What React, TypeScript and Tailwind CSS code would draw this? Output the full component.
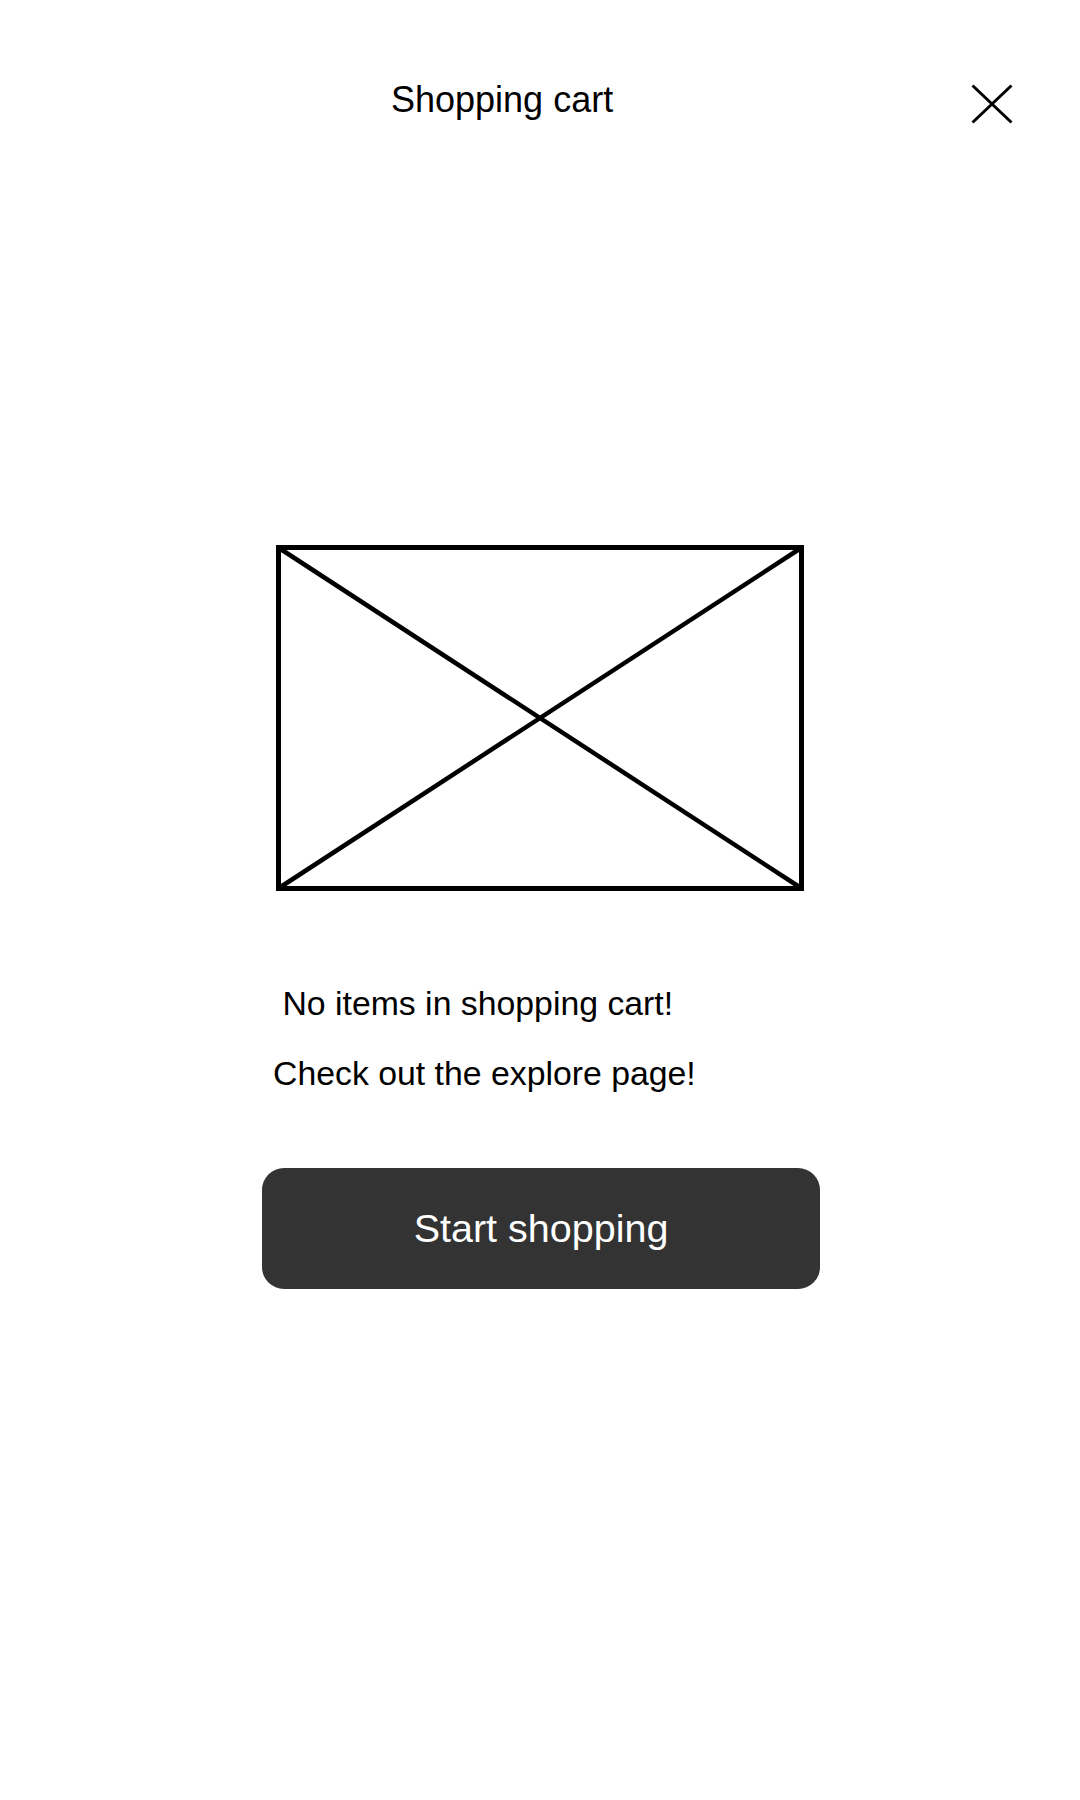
export default function App() {
    return (
        <div className="w-full min-h-[1800px] bg-white text-black font-['Liberation_Sans',Arial,sans-serif]">
            {/* Header */}
            <div className="flex items-start pt-[80px]">
                <h1 className="ml-[391px] text-[36px] leading-[40px] font-normal">
                    Shopping cart
                </h1>
                <button className="ml-auto mr-[67px] mt-[4px]" aria-label="Close">
                    <svg width="42" height="40" viewBox="0 0 42 40">
                        <line x1="1.5" y1="1.5" x2="40.5" y2="38.5" stroke="#000" strokeWidth="3" />
                        <line x1="40.5" y1="1.5" x2="1.5" y2="38.5" stroke="#000" strokeWidth="3" />
                    </svg>
                </button>
            </div>

            {/* Image placeholder */}
            <div className="flex justify-center mt-[421px]">
                <svg width="528" height="346" viewBox="0 0 528 346">
                    <rect x="2.5" y="2.5" width="523" height="341" fill="none" stroke="#000" strokeWidth="5" />
                    <line x1="3" y1="3" x2="525" y2="343" stroke="#000" strokeWidth="4.5" />
                    <line x1="525" y1="3" x2="3" y2="343" stroke="#000" strokeWidth="4.5" />
                </svg>
            </div>

            {/* Empty state text */}
            <div className="pl-[273px] mt-[77px] text-[33.8px] leading-[70px] whitespace-pre">
                <p> No items in shopping cart!</p>
                <p>Check out the explore page!</p>
            </div>

            <div className="pl-[262px] mt-[60px]">
                <button className="w-[558px] h-[121px] rounded-[22px] bg-[#333333] text-white text-[39.5px] flex items-center justify-center">
                    Start shopping
                </button>
            </div>
        </div>
    );
}
